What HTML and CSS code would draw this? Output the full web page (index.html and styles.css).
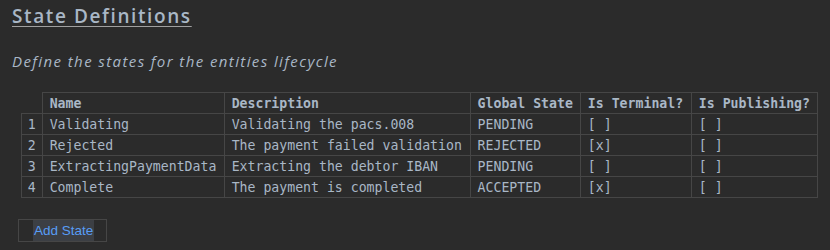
FILE: index.html
```html
<!DOCTYPE html>
<html>
<head>
<meta charset="utf-8">
<link rel="stylesheet" href="styles.css">
</head>
<body>
<h1 class="title">State Definitions</h1>
<p class="subtitle">Define the states for the entities lifecycle</p>
<table class="grid">
  <thead>
    <tr><th class="corner"></th><th class="c-name">Name</th><th class="c-desc">Description</th><th class="c-global">Global State</th><th class="c-term">Is Terminal?</th><th class="c-pub">Is Publishing?</th></tr>
  </thead>
  <tbody>
    <tr><td class="num">1</td><td>Validating</td><td>Validating the pacs.008</td><td>PENDING</td><td>[ ]</td><td>[ ]</td></tr>
    <tr><td class="num">2</td><td>Rejected</td><td>The payment failed validation</td><td>REJECTED</td><td>[x]</td><td>[ ]</td></tr>
    <tr><td class="num">3</td><td>ExtractingPaymentData</td><td>Extracting the debtor IBAN</td><td>PENDING</td><td>[ ]</td><td>[ ]</td></tr>
    <tr><td class="num">4</td><td>Complete</td><td>The payment is completed</td><td>ACCEPTED</td><td>[x]</td><td>[ ]</td></tr>
  </tbody>
</table>
<div class="actions"><button class="add-btn"><span class="add-label">Add State</span></button></div>
</body>
</html>
```
FILE: styles.css
```css
html, body { margin: 0; padding: 0; }
body {
  background: #2b2b2b;
  color: #a9b7c6;
  width: 830px;
  height: 250px;
  overflow: hidden;
  padding: 0 12px;
  box-sizing: border-box;
}
.title {
  margin: 0;
  padding-top: 4px;
  font-family: "Open Sans", sans-serif;
  font-weight: 600;
  font-size: 19px;
  line-height: 24px;
  letter-spacing: 1.6px;
  color: #a9b7c6;
  text-decoration: underline;
  text-decoration-color: #a0a0a0;
  text-underline-offset: 3px;
}
.subtitle {
  margin: 23px 0 0 0;
  font-family: "Open Sans", sans-serif;
  font-style: italic;
  font-size: 15px;
  line-height: 20px;
  letter-spacing: 1.4px;
  color: #a9b7c6;
}
.grid {
  margin: 21px 0 0 9px;
  border-collapse: collapse;
  font-family: "DejaVu Sans Mono", monospace;
  font-size: 13.2px;
  color: #a9b7c6;
}
.grid th, .grid td {
  border: 1px solid #464646;
  height: 21px;
  padding: 0 7px;
  text-align: left;
  white-space: nowrap;
  box-sizing: border-box;
}
.grid th { font-weight: bold; }
.grid th.corner { border-left: none; border-top: none; width: 21px; }
.grid td.num { text-align: center; padding: 0; width: 21px; }
.c-name { width: 182px; }
.c-desc { width: 246px; }
.c-global { width: 110px; }
.c-term { width: 111px; }
.c-pub { width: 126px; }
.actions { margin: 21px 0 0 6px; }
.add-btn {
  background: transparent;
  border: 1px solid #464646;
  padding: 0 10px 0 14px;
  height: 23px;
  width: 89px;
  font-family: "Liberation Sans", sans-serif;
  font-size: 13.5px;
  color: #589df6;
  display: flex;
  align-items: stretch;
}
.add-label {
  background: #3c3f44;
  display: flex;
  align-items: center;
  padding: 0 1px;
}
```
